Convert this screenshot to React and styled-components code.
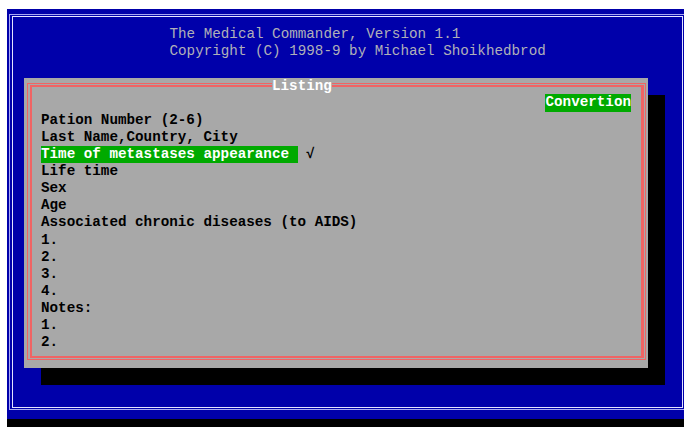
import React from "react";
import styled, { createGlobalStyle } from "styled-components";

// Text-mode cell metrics (80-column VGA look)
const ROW = 17.15;

const GlobalStyle = createGlobalStyle`
  html, body {
    margin: 0;
    padding: 0;
    background: #ffffff;
    overflow: hidden;
  }
  #root {
    width: 684px;
    height: 427px;
    overflow: hidden;
  }
`;

const Desktop = styled.div`
  width: 684px;
  height: 427px;
  box-sizing: border-box;
  padding: 9px 0 0 7px;
  display: flex;
  flex-direction: column;
  font-family: "Liberation Mono", "DejaVu Sans Mono", monospace;
  font-size: 14.25px;
  line-height: ${ROW}px;
`;

const Screen = styled.div`
  flex: none;
  height: 410px;
  box-sizing: border-box;
  padding: 5px 0 0 2px;
  background: #0000aa;
  overflow: hidden;
`;

const BlackStrip = styled.div`
  flex: 1;
  background: #000000;
`;

const FrameOuter = styled.div`
  width: 677px;
  height: 396px;
  box-sizing: border-box;
  border: 1px solid #a8a8f4;
  padding: 1px 2px;
`;

const FrameInner = styled.div`
  height: 100%;
  box-sizing: border-box;
  border: 1px solid #e4e4ff;
  display: flex;
  flex-direction: column;
`;

const Header = styled.div`
  padding: 9.15px 0 0 156.5px;
  color: #b0b0b8;
  white-space: pre;
`;

const Line = styled.div`
  height: ${ROW}px;
`;

const Dialog = styled.div`
  position: relative;
  margin: 17.3px 0 0 11px;
  width: 624px;
  height: 290.5px;
  box-sizing: border-box;
  padding: 5px 2px 8px 3px;
  background: #a8a8a8;
  box-shadow: 17px 17px 0 #000000;
`;

const DialogTitle = styled.span`
  position: absolute;
  top: 0;
  left: 248px;
  height: ${ROW}px;
  line-height: ${ROW}px;
  background: #a8a8a8;
  color: #ffffff;
  font-weight: bold;
  white-space: pre;
`;

const RedOuter = styled.div`
  height: 100%;
  box-sizing: border-box;
  border: 1px solid #f06464;
  padding: 1px 1px 1px 2px;
`;

const RedInner = styled.div`
  height: 100%;
  box-sizing: border-box;
  border-style: solid;
  border-color: #f06464;
  border-width: 2px 3px 2px 2px;
  padding: 7.7px 10px 0 9px;
  display: flex;
  flex-direction: column;
`;

const Row = styled.div`
  height: ${ROW}px;
  display: flex;
  justify-content: ${(p) => (p.$right ? "flex-end" : "flex-start")};
  color: #000000;
  font-weight: bold;
  white-space: pre;
`;

const Highlight = styled.span`
  background: #00aa00;
  color: #ffffff;
`;

const items = [
  "Pation Number (2-6)",
  "Last Name,Country, City",
  null,
  "Life time",
  "Sex",
  "Age",
  "Associated chronic diseases (to AIDS)",
  "1.",
  "2.",
  "3.",
  "4.",
  "Notes:",
  "1.",
  "2.",
];

export default function App() {
  return (
    <>
      <GlobalStyle />
      <Desktop>
        <Screen>
          <FrameOuter>
            <FrameInner>
              <Header>
                <Line>The Medical Commander, Version 1.1</Line>
                <Line>Copyright (C) 1998-9 by Michael Shoikhedbrod</Line>
              </Header>
              <Dialog>
                <DialogTitle>Listing</DialogTitle>
                <RedOuter>
                  <RedInner>
                    <Row $right>
                      <Highlight>Convertion</Highlight>
                    </Row>
                    {items.map((text, i) =>
                      text === null ? (
                        <Row key={i}>
                          <Highlight>Time of metastases appearance </Highlight>
                          <span> √</span>
                        </Row>
                      ) : (
                        <Row key={i}>{text}</Row>
                      )
                    )}
                  </RedInner>
                </RedOuter>
              </Dialog>
            </FrameInner>
          </FrameOuter>
        </Screen>
        <BlackStrip />
      </Desktop>
    </>
  );
}
